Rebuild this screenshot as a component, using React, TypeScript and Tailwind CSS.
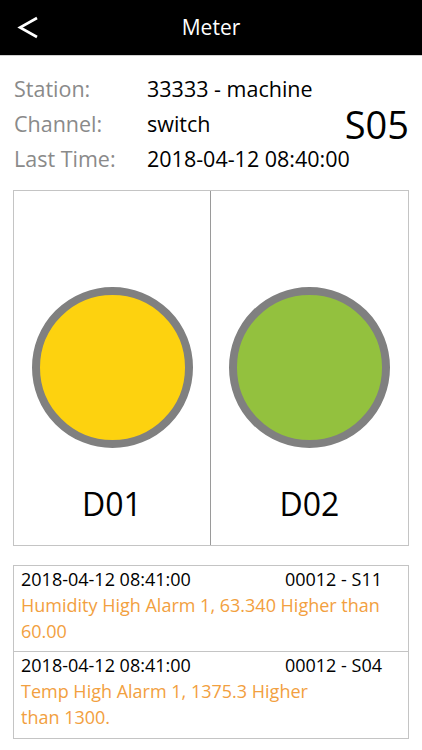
export default function App() {
  return (
    <div className="w-[422px] h-[750px] bg-white overflow-hidden" style={{ fontFamily: '"Open Sans", "Noto Sans", sans-serif' }}>
      <Header />
      <InfoBlock />
      <div className="mx-[13px] mt-[13px] h-[356px] grid grid-cols-2 border border-[#c4c4c4]">
        <Lamp label="D01" color="bg-[#fdd20f]" className="border-r border-[#9a9a9a]" />
        <Lamp label="D02" color="bg-[#93c13e]" />
      </div>
      <div className="mx-[13px] mt-[19px] border border-[#c4c4c4]">
        <AlarmRow
          time="2018-04-12 08:41:00"
          code="00012 - S11"
          lines={['Humidity High Alarm 1, 63.340 Higher than', '60.00']}
          className="border-b border-[#c4c4c4]"
        />
        <AlarmRow
          time="2018-04-12 08:41:00"
          code="00012 - S04"
          lines={['Temp High Alarm 1, 1375.3 Higher', 'than 1300.']}
        />
      </div>
    </div>
  );
}

function Header() {
  return (
    <div className="relative h-[56px] bg-black border-b border-[#d0d0d0] flex items-center justify-center">
      <svg className="absolute left-[17px] top-[16px]" width="22" height="24" viewBox="0 0 22 24" fill="none">
        <polyline points="20,2 3,11.5 20,21" stroke="white" strokeWidth="2.6" strokeLinejoin="miter" />
      </svg>
      <span className="text-white text-[21px] leading-none">Meter</span>
    </div>
  );
}

function InfoBlock() {
  const rows = [
    ['Station:', '33333 - machine'],
    ['Channel:', 'switch'],
    ['Last Time:', '2018-04-12 08:40:00'],
  ];
  return (
    <div className="relative pt-[16px] pl-[14px]">
      {rows.map(([k, v]) => (
        <div key={k} className="flex h-[35px] items-center text-[21.5px]">
          <span className="w-[133px] text-[#8a8a8a]">{k}</span>
          <span className="text-black">{v}</span>
        </div>
      ))}
      <span className="absolute right-[13px] top-[49px] text-[38px] leading-none text-black">S05</span>
    </div>
  );
}

function Lamp({ label, color, className = '' }: { label: string; color: string; className?: string }) {
  return (
    <div className={`flex flex-col items-center pt-[96px] ${className}`}>
      <div className={`w-[161px] h-[161px] rounded-full border-[8px] border-[#808080] ${color}`} />
      <div className="mt-[36px] text-[32px] leading-[40px] text-black">{label}</div>
    </div>
  );
}

function AlarmRow({ time, code, lines, className = '' }: { time: string; code: string; lines: string[]; className?: string }) {
  return (
    <div className={`h-[86px] pl-[7px] pr-[26px] ${className}`}>
      <div className="flex justify-between text-[18px] leading-[26px] text-black">
        <span>{time}</span>
        <span>{code}</span>
      </div>
      <div className="text-[18px] leading-[26px] text-[#f2a040]">
        {lines.map((l) => (
          <div key={l}>{l}</div>
        ))}
      </div>
    </div>
  );
}
